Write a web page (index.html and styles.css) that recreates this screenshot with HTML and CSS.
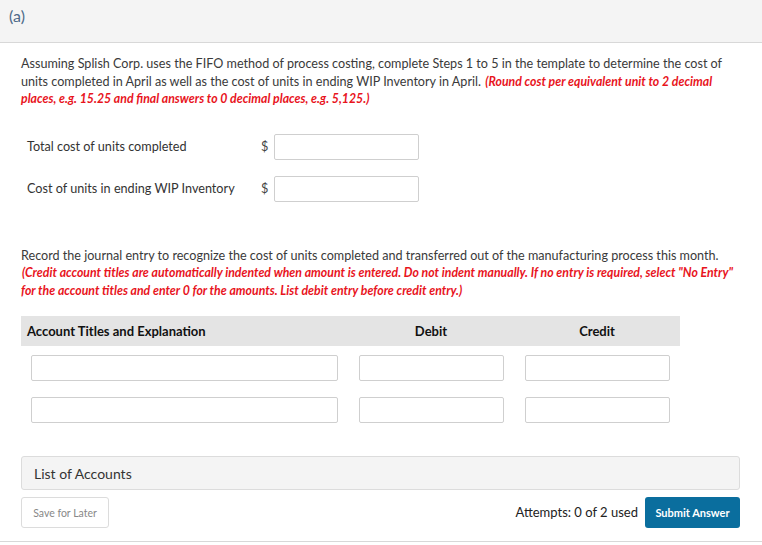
FILE: index.html
```html
<!DOCTYPE html>
<html>
<head>
<meta charset="utf-8">
<link rel="stylesheet" href="styles.css">
</head>
<body>
<div class="header"><span class="part">(a)</span></div>
<div class="content">
  <p class="para">Assuming Splish Corp. uses the FIFO method of process costing, complete Steps 1 to 5 in the template to determine the cost of units completed in April as well as the cost of units in ending WIP Inventory in April. <em class="note">(Round cost per equivalent unit to 2 decimal places, e.g. 15.25 and final answers to 0 decimal places, e.g. 5,125.)</em></p>

  <div class="answers">
    <div class="arow">
      <span class="alabel">Total cost of units completed</span>
      <span class="dollar">$</span>
      <input class="field money" type="text">
    </div>
    <div class="arow">
      <span class="alabel">Cost of units in ending WIP Inventory</span>
      <span class="dollar">$</span>
      <input class="field money" type="text">
    </div>
  </div>

  <p class="para second">Record the journal entry to recognize the cost of units completed and transferred out of the manufacturing process this month. <em class="note">(Credit account titles are automatically indented when amount is entered. Do not indent manually. If no entry is required, select "No Entry" for the account titles and enter 0 for the amounts. List debit entry before credit entry.)</em></p>

  <div class="journal">
    <div class="jhead">
      <div class="jh first">Account Titles and Explanation</div>
      <div class="jh center">Debit</div>
      <div class="jh center">Credit</div>
    </div>
    <div class="jrow">
      <div class="jc first"><input class="field acct" type="text"></div>
      <div class="jc center"><input class="field amt" type="text"></div>
      <div class="jc center"><input class="field amt" type="text"></div>
    </div>
    <div class="jrow">
      <div class="jc first"><input class="field acct" type="text"></div>
      <div class="jc center"><input class="field amt" type="text"></div>
      <div class="jc center"><input class="field amt" type="text"></div>
    </div>
  </div>

  <div class="accounts">List of Accounts</div>

  <div class="footer">
    <button class="save">Save for Later</button>
    <div class="right">
      <span class="attempts">Attempts: 0 of 2 used</span>
      <button class="submit">Submit Answer</button>
    </div>
  </div>
</div>
<div class="bottomline"></div>
</body>
</html>
```

FILE: styles.css
```css
* { box-sizing: border-box; }
html, body { margin: 0; padding: 0; background: #fff; }
body {
  font-family: Lato, "Open Sans", "Liberation Sans", sans-serif;
  color: #333;
  width: 762px;
  height: 545px;
  overflow: hidden;
}
.header {
  height: 43px;
  background: #f4f4f4;
  border-bottom: 1px solid #d8d8d8;
  padding: 6px 0 0 9px;
}
.part {
  font-size: 16px;
  color: #4d6a89;
  line-height: 20px;
}
.content {
  padding: 12px 16px 0 21px;
}
.para {
  margin: 0;
  font-size: 12.6px;
  line-height: 17.5px;
  color: #3a3a3a;
}
.note {
  color: #e8141d;
  font-weight: bold;
  font-style: italic;
  font-size: 12.3px;
  margin-left: 1px;
}
.answers {
  margin-top: 26px;
  padding-left: 6px;
  display: flex;
  flex-direction: column;
  gap: 16px;
}
.arow {
  display: flex;
  align-items: center;
  height: 26px;
}
.alabel {
  width: 234px;
  font-size: 12.65px;
  color: #333;
}
.dollar {
  font-size: 12.65px;
  color: #444;
  width: 13px;
}
.field {
  height: 26px;
  border: 1px solid #cfcfcf;
  border-radius: 2px;
  background: #fff;
  margin: 0;
  padding: 0 4px;
  font: inherit;
}
.money { width: 145px; }
.second { margin-top: 45px; }
.journal {
  margin-top: 17px;
  width: 659px;
}
.jhead, .jrow {
  display: grid;
  grid-template-columns: 327px 166px 166px;
}
.jhead {
  background: #e4e4e4;
  height: 30px;
  align-items: center;
}
.jh {
  font-size: 13px;
  font-weight: bold;
  color: #111;
}
.jh.first { padding-left: 6px; }
.center { text-align: center; }
.jrow { margin-top: 9px; height: 26px; }
.jrow + .jrow { margin-top: 16px; }
.jc { display: flex; }
.jc.first { padding-left: 10px; }
.jc.center { justify-content: center; }
.acct { width: 307px; }
.amt { width: 145px; }
.accounts {
  margin-top: 33px;
  margin-right: 6px;
  height: 34px;
  background: #f4f4f4;
  border: 1px solid #dcdcdc;
  border-radius: 3px;
  padding-left: 12px;
  display: flex;
  align-items: center;
  font-size: 14px;
  color: #333;
}
.footer {
  margin-top: 7px;
  margin-right: 6px;
  display: flex;
  justify-content: space-between;
  align-items: center;
}
.save {
  width: 88px;
  height: 31px;
  border: 1px solid #dcdcdc;
  border-radius: 3px;
  background: #fff;
  font-family: Lato, "Open Sans", sans-serif;
  font-size: 10.5px;
  color: #888;
  padding: 0;
}
.right {
  display: flex;
  align-items: center;
  gap: 7px;
}
.attempts {
  font-size: 13px;
  color: #222;
  margin-top: -2px;
}
.submit {
  width: 95px;
  height: 31px;
  border: none;
  border-radius: 3px;
  background: #0a6e9e;
  color: #fff;
  font-family: Lato, "Open Sans", sans-serif;
  font-weight: bold;
  font-size: 11px;
  padding: 0;
}
.bottomline {
  margin-top: 13px;
  border-top: 1px solid #d8d8d8;
}
```
